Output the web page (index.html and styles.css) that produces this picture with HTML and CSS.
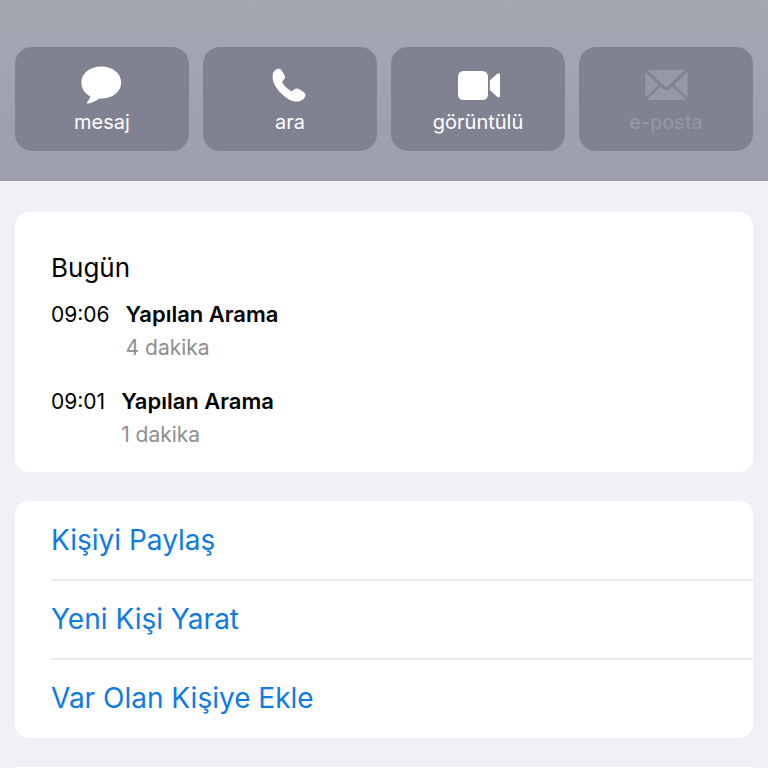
FILE: index.html
```html
<!DOCTYPE html>
<html lang="tr">
<head>
    <meta charset="UTF-8">
    <meta name="viewport" content="width=device-width, initial-scale=1.0">
    <title>Kişi</title>
    <link rel="stylesheet" href="styles.css">
</head>
<body>

    <header class="contact-header">
        <button type="button" class="action">
            <svg class="action-icon" viewBox="0 0 44 38" aria-hidden="true">
                <path d="M21.200 0.500C32.200 0.500 41.200 7.200 41.200 16.500C41.200 26 32.200 32.500 21.700 32.500C20.900 32.500 20.200 32.500 19.500 32.400C16 34.800 11.500 37 7.800 37.400C6.900 37.500 6.700 36.800 7.200 36.100C8.700 34.500 9.900 32.500 10.300 30.600C5 27.500 1.400 22.500 1.400 16.500C1.400 7.200 10.200 0.500 21.200 0.500Z"/>
            </svg>
            <span>mesaj</span>
        </button>
        <button type="button" class="action">
            <svg class="action-icon" viewBox="0 0 44 38" aria-hidden="true">
                <path d="M7.800 3.700C9.800 2.200 12.300 2.600 13.700 4.500L16.400 8.900C17.300 10.500 17 12.100 15.900 13.500L14.700 15.100C14.200 15.800 14.200 16.400 14.500 17C16.400 20.200 19.500 23.100 22.800 24.900C23.500 25.300 24.100 25.200 24.600 24.700L26.400 23.300C27.900 22.200 29.400 22.200 31 23.100L35.600 26C37.700 27.400 38 29.500 36.600 31.400C34.800 34 32 35.600 28.800 35.600C23.500 35.600 17.200 31.500 12.200 26.400C7.300 21.400 4.600 16 4.600 10.500C4.600 7.500 5.600 5.300 7.800 3.700Z"/>
            </svg>
            <span>ara</span>
        </button>
        <button type="button" class="action">
            <svg class="action-icon" viewBox="0 0 44 38" aria-hidden="true">
                <rect x="2" y="5" width="30" height="29" rx="5.500"/>
                <path d="M33.800 15.500C33.800 14.800 34.100 14.300 34.600 13.800L41.200 7.800C42.800 6.500 44 7.200 44 9V29.500C44 31.300 42.800 32 41.200 30.700L34.600 24.700C34.100 24.300 33.800 23.700 33.800 23Z"/>
            </svg>
            <span>görüntülü</span>
        </button>
        <button type="button" class="action" disabled>
            <svg class="action-icon" viewBox="0 0 44 38" aria-hidden="true">
                <path d="M3.500 4H41L24 20.300C22.900 21.400 21.700 21.400 20.600 20.300Z"/>
                <path d="M1.200 6L14.800 18.900L1.200 31.500Z"/>
                <path d="M43.500 6V31.500L29.900 18.900Z"/>
                <path d="M16.400 20.400L19 22.800C21.200 24.700 23.500 24.700 25.700 22.800L28.300 20.400L41.500 33C41.200 33.800 40.500 34 39.500 34H5.200C4.200 34 3.500 33.800 3.200 33Z"/>
            </svg>
            <span>e-posta</span>
        </button>
    </header>

    <main class="content">
        <section class="card calls">
            <h2>Bugün</h2>
            <div class="call">
                <time>09:06</time>
                <div>
                    <div class="call-type">Yapılan Arama</div>
                    <div class="call-length">4 dakika</div>
                </div>
            </div>
            <div class="call">
                <time>09:01</time>
                <div>
                    <div class="call-type">Yapılan Arama</div>
                    <div class="call-length">1 dakika</div>
                </div>
            </div>
        </section>

        <nav class="card links">
            <a href="#">Kişiyi Paylaş</a>
            <a href="#">Yeni Kişi Yarat</a>
            <a href="#">Var Olan Kişiye Ekle</a>
        </nav>

        <!-- next group, continues below the fold -->
        <section class="card next-card"></section>
    </main>

</body>
</html>
```
FILE: styles.css
```css
* {
    box-sizing: border-box;
}

body {
    font-family: Inter, "Liberation Sans", sans-serif;
    background-color: #f1f0f7;
    color: #000;
    margin: 0;
    min-height: 100vh;
    display: flex;
    flex-direction: column;
}

/* Header with the quick actions */
.contact-header {
    display: grid;
    grid-template-columns: repeat(4, 1fr);
    gap: 14px;
    padding: 47px 15px 30px;
    background: linear-gradient(#a5a7b3, #9d9eae);
}

.action {
    display: flex;
    flex-direction: column;
    align-items: center;
    gap: 4px;
    padding: 19px 0 15px;
    border: none;
    border-radius: 17px;
    background-color: #808292;
    color: #fff;
    font-family: inherit;
    font-size: 20px;
    line-height: 28px;
    cursor: pointer;
}

.action-icon {
    width: 44px;
    height: 38px;
    fill: currentColor;
}

.action:disabled {
    color: #9698a7;
    cursor: default;
}

.content {
    flex: 1;
    display: flex;
    flex-direction: column;
    gap: 29px;
    padding: 31px 15px 0;
}

.card {
    background-color: #fff;
    border-radius: 14px;
}

/* Call history */
.calls {
    padding: 40px 36px 21px;
}

.calls h2 {
    margin: 0 0 14px;
    font-size: 26px;
    font-weight: 400;
    line-height: 32px;
}

.call {
    display: flex;
    gap: 16px;
    font-size: 21px;
    line-height: 33px;
}

.call + .call {
    margin-top: 21px;
}

.call-type {
    font-size: 22px;
    font-weight: 600;
}

.call-length {
    color: #8e8e8e;
}

/* Contact links */
.links {
    padding: 1px 0 1px 36px;
}

.links a {
    display: block;
    padding: 20px 0;
    color: #107ae3;
    font-size: 28px;
    line-height: 37px;
    text-decoration: none;
}

.links a + a {
    border-top: 2px solid #ebebed;
}

.next-card {
    flex: 1;
    border-radius: 14px 14px 0 0;
}
```
